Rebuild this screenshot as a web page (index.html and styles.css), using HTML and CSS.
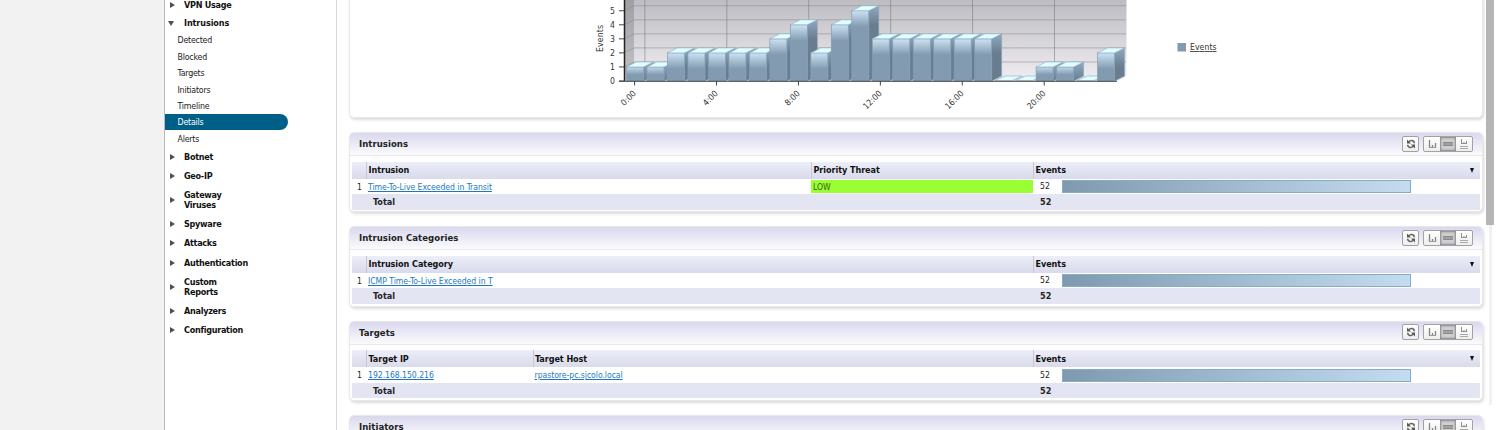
FILE: index.html
```html
<!DOCTYPE html>
<html lang="en">
<head>
<meta charset="utf-8">
<title>Intrusions - Details</title>
<link rel="stylesheet" href="styles.css">
</head>
<body>
<svg class="defs" width="0" height="0">
  <symbol id="i-refresh" viewBox="0 0 10 10"><path d="M2.500 3Q4 1.300 6 1.600Q8.300 2 8.300 4.300M7.500 7Q6 8.700 4 8.400Q1.700 8 1.700 5.700" fill="none" stroke="#666" stroke-width="1.5"/><path d="M1 .5V4.500H5ZM9 9.500V5.500H5Z" fill="#5a5a5a"/></symbol>
  <symbol id="i-chart" viewBox="0 0 10 10"><path d="M2.500 1v8M5.500 6v3M8.500 4v5" fill="none" stroke="#868686" stroke-width="1.3"/><path d="M2 8.500h7" stroke="#999"/></symbol>
  <symbol id="i-table" viewBox="0 0 10 10"><path d="M0 3.500h10M0 6.500h10" stroke="#8c8c8c"/><path d="M0 5h10" stroke="#a0a0a0" stroke-width="2"/></symbol>
  <symbol id="i-both" viewBox="0 0 10 10"><path d="M2.500 0v5M5 3v2M7.500 2v3M2 4.500h6" fill="none" stroke="#8f8f8f"/><path d="M1 7.500h8M1 9.500h8" stroke="#aaa"/></symbol>
</svg>
<div class="app">
  <div class="gutter"></div>
  <nav class="nav">
    <div class="group"><i></i><b>VPN Usage</b></div>
    <div class="group open"><i></i><b>Intrusions</b></div>
    <a class="sub">Detected</a>
    <a class="sub">Blocked</a>
    <a class="sub">Targets</a>
    <a class="sub">Initiators</a>
    <a class="sub">Timeline</a>
    <a class="sub active">Details</a>
    <a class="sub">Alerts</a>
    <div class="group first"><i></i><b>Botnet</b></div>
    <div class="group"><i></i><b>Geo-IP</b></div>
    <div class="group two"><i></i><b>Gateway<br>Viruses</b></div>
    <div class="group"><i></i><b>Spyware</b></div>
    <div class="group"><i></i><b>Attacks</b></div>
    <div class="group"><i></i><b>Authentication</b></div>
    <div class="group two"><i></i><b>Custom<br>Reports</b></div>
    <div class="group"><i></i><b>Analyzers</b></div>
    <div class="group"><i></i><b>Configuration</b></div>
  </nav>
  <main class="main">
    <section class="panel chart-panel">
      <svg id="chart" class="chart" width="1131" height="118" viewBox="350 0 1131 118">
        <defs>
          <linearGradient id="wall" x1="0" y1="0" x2="0" y2="1"><stop offset="0" stop-color="#bdbcc2"/><stop offset="1" stop-color="#edebef"/></linearGradient>
          <linearGradient id="side" x1="0" y1="0" x2="0" y2="1"><stop offset="0" stop-color="#a09fa3"/><stop offset="1" stop-color="#c5c4c8"/></linearGradient>
          <linearGradient id="face" gradientUnits="userSpaceOnUse" x1="0" y1="0" x2="0" y2="16"><stop offset="0" stop-color="#cde2f4"/><stop offset="1" stop-color="#829bb0"/></linearGradient>
          <linearGradient id="facelow" x1="0" y1="0" x2="0" y2="1"><stop offset="0" stop-color="#c4d9ea"/><stop offset=".55" stop-color="#829bb0"/></linearGradient>
          <linearGradient id="edge" gradientUnits="userSpaceOnUse" x1="0" y1="-5" x2="0" y2="14"><stop offset="0" stop-color="#91abc1"/><stop offset="1" stop-color="#687d8f"/></linearGradient>
        </defs>
      </svg>
    </section>

    <section class="panel">
      <header><h2>Intrusions</h2><div class="tools"><span class="btn"><svg><use href="#i-refresh"/></svg></span><div class="seg"><span><svg><use href="#i-chart"/></svg></span><span class="on"><svg><use href="#i-table"/></svg></span><span><svg><use href="#i-both"/></svg></span></div></div></header>
      <div class="grid three">
        <div class="row head"><span></span><span>Intrusion</span><span>Priority Threat</span><span>Events<i class="sort"></i></span></div>
        <div class="row"><span class="n">1</span><span><a>Time-To-Live Exceeded in Transit</a></span><span class="low">LOW</span><span class="ev">52<i class="bar"></i></span></div>
        <div class="row total"><span></span><span>Total</span><span></span><span>52</span></div>
      </div>
    </section>

    <section class="panel">
      <header><h2>Intrusion Categories</h2><div class="tools"><span class="btn"><svg><use href="#i-refresh"/></svg></span><div class="seg"><span><svg><use href="#i-chart"/></svg></span><span class="on"><svg><use href="#i-table"/></svg></span><span><svg><use href="#i-both"/></svg></span></div></div></header>
      <div class="grid two-col">
        <div class="row head"><span></span><span>Intrusion Category</span><span>Events<i class="sort"></i></span></div>
        <div class="row"><span class="n">1</span><span><a>ICMP Time-To-Live Exceeded in T</a></span><span class="ev">52<i class="bar"></i></span></div>
        <div class="row total"><span></span><span>Total</span><span>52</span></div>
      </div>
    </section>

    <section class="panel">
      <header><h2>Targets</h2><div class="tools"><span class="btn"><svg><use href="#i-refresh"/></svg></span><div class="seg"><span><svg><use href="#i-chart"/></svg></span><span class="on"><svg><use href="#i-table"/></svg></span><span><svg><use href="#i-both"/></svg></span></div></div></header>
      <div class="grid targets">
        <div class="row head"><span></span><span>Target IP</span><span>Target Host</span><span>Events<i class="sort"></i></span></div>
        <div class="row"><span class="n">1</span><span><a>192.168.150.216</a></span><span><a>rpastore-pc.sjcolo.local</a></span><span class="ev">52<i class="bar"></i></span></div>
        <div class="row total"><span></span><span>Total</span><span></span><span>52</span></div>
      </div>
    </section>

    <section class="panel">
      <header><h2>Initiators</h2><div class="tools"><span class="btn"><svg><use href="#i-refresh"/></svg></span><div class="seg"><span><svg><use href="#i-chart"/></svg></span><span class="on"><svg><use href="#i-table"/></svg></span><span><svg><use href="#i-both"/></svg></span></div></div></header>
    </section>
  </main>
  <div class="scroll"><div class="thumb"></div><div class="track"></div></div>
</div>
<script src="chart.js"></script>
</body>
</html>
```
FILE: styles.css
```css
* { box-sizing: border-box; }
body { margin: 0; height: 430px; overflow: hidden; background: #fff; color: #222; font: 8.6px/10px "DejaVu Sans Condensed", "DejaVu Sans", sans-serif; font-stretch: condensed; }
.defs { position: absolute; }
.app { display: flex; height: 430px; overflow: hidden; }
.gutter { width: 165px; background: #f2f2f2; border-right: 1px solid #b9b9b9; flex: none; }

.nav { width: 172px; flex: none; border-right: 1px solid #d8d8d8; margin-top: -5px; height: 436px; }
.group { height: 19.15px; display: flex; align-items: center; color: #111; }
.group b { font-size: 9px; line-height: 10px; letter-spacing: -.28px; }
.group.two { height: 29.2px; }
.group.open { height: 18px; }
.group.first { margin-top: .4px; }
.group i { width: 0; height: 0; margin: 0 9px 0 5px; border-left: 5px solid #505050; border-top: 3px solid transparent; border-bottom: 3px solid transparent; }
.group.open i { margin: 0 9px 0 3px; border-top: 5px solid #505050; border-left: 3.500px solid transparent; border-right: 3.500px solid transparent; border-bottom: 0; }
.group.open b { margin-left: 1px; letter-spacing: -.1px; }
.sub { display: flex; align-items: center; height: 16.4px; padding-left: 12.500px; font-size: 8.8px; letter-spacing: -.22px; color: #222; }
.sub.active { background: #005f87; color: #fff; width: 123px; border-radius: 0 9px 9px 0; }

.main { width: 1149px; flex: none; padding-left: 12px; }
.panel { width: 1134px; height: 80.4px; margin-bottom: 14px; border: 1px solid #e8e8ea; border-radius: 5px; background: #fff; box-shadow: 1px 2px 3px rgba(0,0,0,.14); }
.chart-panel { height: 123px; margin-top: -5px; padding-top: 4px; overflow: visible; }
.chart { display: block; }
.chart text { font-size: 8.6px; fill: #333; }

header { height: 23px; display: flex; justify-content: space-between; align-items: center; padding: 0 9px; border-bottom: 1px solid #e9e9ec; border-radius: 4px 4px 0 0; background: linear-gradient(#d9d8ee, #fbfbfd); }
h2 { margin: 0; font-size: 9.5px; line-height: 12px; letter-spacing: .04px; }
.tools { display: flex; gap: 4px; margin-top: -1px; }
.btn, .seg { border: 1px solid #a2a2a5; border-radius: 2px; background: linear-gradient(#fff, #eee); }
.btn { width: 17px; height: 16px; display: grid; place-items: center; }
.seg { display: flex; width: 50px; height: 16px; }
.seg span { flex: 1; display: grid; place-items: center; }
.seg .on { background: #cfcfd1; box-shadow: inset 0 0 2px 1px #888; }
.tools svg { width: 10px; height: 10px; display: block; }

.grid { margin: 5.500px 0 0 2px; width: 1128px; }
.row { display: grid; height: 15px; align-items: center; }
.three .row { grid-template-columns: 14px 445px 222px 1fr; }
.two-col .row { grid-template-columns: 14px 667px 1fr; }
.targets .row { grid-template-columns: 14px 166.500px 500.500px 1fr; }
.row.head { height: 17px; font-weight: bold; font-size: 9px; letter-spacing: -.06px; background: linear-gradient(#eceef8, #d9daeb); color: #111; margin-bottom: .5px; }
.head span + span { border-left: 1px solid #c6c7d2; height: 100%; display: flex; align-items: center; }
.row > span + span { padding-left: 2px; }
.row.head > span + span { padding-left: 1.500px; }
.row a { color: #1b78be; text-decoration: underline; letter-spacing: -.04px; }
.n { padding-left: 5px; }
.row.total { background: #e4e5f2; font-weight: bold; font-size: 9px; height: 15.500px; }
.row.total > span:nth-child(2) { padding-left: 7px; }
.row.total > span:last-child { padding-left: 7px; }
.row > .low { background: #9f3; height: 13.500px; line-height: 14px; color: #3e6010; }
.row > .ev { display: flex; align-items: center; padding-left: 7px; line-height: 9px; }
.bar { width: 349px; height: 13px; margin-left: 12px; border: 1px solid #86abc4; background: linear-gradient(90deg, #7f99ae, #c3dcf0); }
.sort { margin-left: auto; margin-right: 6px; border-top: 5px solid #111; border-left: 2.500px solid transparent; border-right: 2.500px solid transparent; }

.scroll { flex: none; width: 8px; }
.thumb { height: 225px; background: #b5b5b5; }
.track { height: 180px; width: 3px; margin-left: 3px; background: #f1f1f1; }
```
FILE: chart.js
```javascript
const values = [1,1,2,2,2,2,2,3,4,2,4,5,3,3,3,3,3,3,0,0,1,1,0,2];
const unit = 14.05, base = 81, x0 = 626.5, pitch = 20.48, barW = 17, dx = 10, dy = 5;
let out = '<rect x="634" y="0" width="492.500" height="76" fill="url(#wall)"/>' +
  '<path d="M624 0H634V76L624 81Z" fill="url(#side)"/>' +
  '<path d="M624 81L634 76H1126.500L1117 81Z" fill="#dcdbe0"/>';
for (let i = 1; i <= 5; i++) {
  const y = base - unit * i;
  out += `<path d="M624 ${y}L634 ${y - dy}H1126" fill="none" stroke="#88888d" stroke-opacity=".55"/>`;
}
for (let i = 0; i < 6; i++) {
  out += `<path d="M${644.9 + i * pitch * 4} 0V76" stroke="#77777c" stroke-opacity=".55"/>`;
}
values.forEach((v, i) => {
  const x = x0 + i * pitch, h = v * unit, y = base - h;
  if (v) {
    out += `<g transform="translate(${x} ${y})"><path d="M${barW} 0l${dx} -${dy}V${h - dy}L${barW} ${h}Z" fill="url(#edge)" stroke="#8aa5ba" stroke-width=".5"/>` +
      `<rect width="${barW}" height="${h}" fill="url(#${v === 1 ? 'facelow' : 'face'})" stroke="#829eb5" stroke-width=".7"/>` +
      `<path d="M0 0L${dx} -${dy}H${barW + dx}L${barW} 0Z" fill="#e0fdff" stroke="#8eacc3" stroke-width=".6"/></g>`;
  } else {
    out += `<path d="M${x} 80.500L${x + dx} 76H${x + dx + barW}L${x + barW} 80.500Z" fill="#e0fdff" stroke="#8eacc3" stroke-width=".6"/>`;
  }
});
out += '<path d="M624.500 0V81" stroke="#222" stroke-width="1.5"/><path d="M619 81.300H1117" stroke="#444"/>';
for (let i = 0; i <= 5; i++) {
  const y = base - unit * i;
  out += `<path d="M619 ${y}H624" stroke="#444"/><text x="615" y="${y + 3.2}" text-anchor="end">${i}</text>`;
}
['0:00','4:00','8:00','12:00','16:00','20:00'].forEach((t, i) => {
  const x = 634.6 + i * pitch * 4;
  out += `<path d="M${x} 81V85.500" stroke="#444"/><text transform="translate(${x + 2} 94) rotate(-45)" text-anchor="end">${t}</text>`;
});
out += '<text transform="translate(602.5 52) rotate(-90)" textLength="27">Events</text>' +
  '<rect x="1177.500" y="43" width="8.500" height="8.500" fill="#829bb0"/>' +
  '<text x="1190" y="50" textLength="26.500" text-decoration="underline">Events</text>';
document.getElementById('chart').insertAdjacentHTML('beforeend', out);
```
